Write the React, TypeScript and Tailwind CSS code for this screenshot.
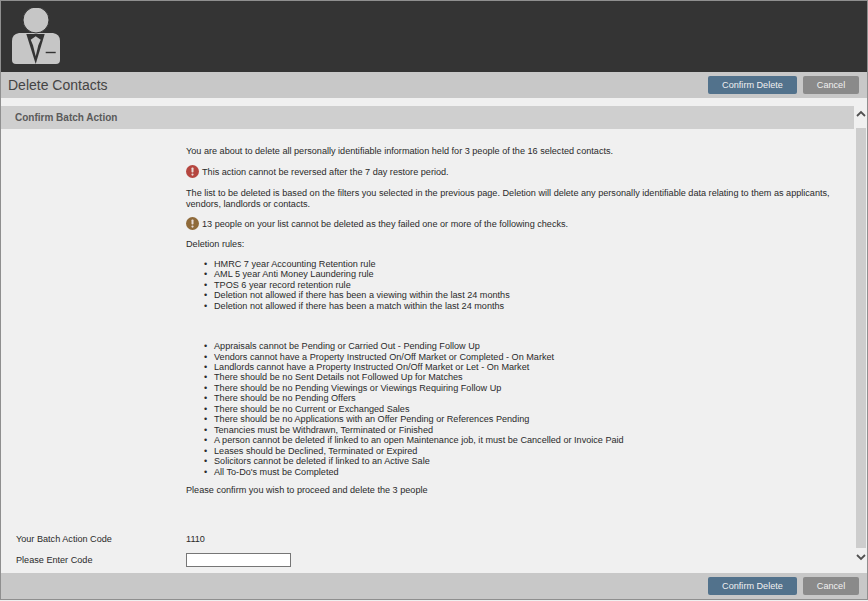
const rulesA = [
  "HMRC 7 year Accounting Retention rule",
  "AML 5 year Anti Money Laundering rule",
  "TPOS 6 year record retention rule",
  "Deletion not allowed if there has been a viewing within the last 24 months",
  "Deletion not allowed if there has been a match within the last 24 months",
];

const rulesB = [
  "Appraisals cannot be Pending or Carried Out - Pending Follow Up",
  "Vendors cannot have a Property Instructed On/Off Market or Completed - On Market",
  "Landlords cannot have a Property Instructed On/Off Market or Let - On Market",
  "There should be no Sent Details not Followed Up for Matches",
  "There should be no Pending Viewings or Viewings Requiring Follow Up",
  "There should be no Pending Offers",
  "There should be no Current or Exchanged Sales",
  "There should be no Applications with an Offer Pending or References Pending",
  "Tenancies must be Withdrawn, Terminated or Finished",
  "A person cannot be deleted if linked to an open Maintenance job, it must be Cancelled or Invoice Paid",
  "Leases should be Declined, Terminated or Expired",
  "Solicitors cannot be deleted if linked to an Active Sale",
  "All To-Do's must be Completed",
];

function Buttons() {
  return (
    <div className="flex gap-[6px] pr-[8px]">
      <button className="h-[18px] w-[89px] rounded-[2px] bg-[#52728c] text-[9.12px] leading-[18px] text-[#f0f0f0]">
        Confirm Delete
      </button>
      <button className="h-[18px] w-[56px] rounded-[2px] bg-[#8a8a8a] text-[9.12px] leading-[18px] text-[#f0f0f0]">
        Cancel
      </button>
    </div>
  );
}

function Alert({ color, children }: { color: string; children: string }) {
  return (
    <div className="flex h-[13px] items-center gap-[3px]">
      <svg width="13" height="13" viewBox="0 0 13 13" className="shrink-0">
        <circle cx="6.5" cy="6.5" r="6.5" fill={color} />
        <rect x="5.5" y="2.5" width="2" height="5" rx="0.8" fill="#e8dcd8" />
        <circle cx="6.5" cy="9.6" r="1.1" fill="#e8dcd8" />
      </svg>
      <span>{children}</span>
    </div>
  );
}

function RuleList({ items }: { items: string[] }) {
  return (
    <ul className="pl-[18px]">
      {items.map((r) => (
        <li key={r} className="flex">
          <span className="w-[10px] shrink-0">•</span>
          <span>{r}</span>
        </li>
      ))}
    </ul>
  );
}

export default function App() {
  return (
    <div className="flex h-[601px] w-[868px] flex-col overflow-hidden bg-[#f0f0f0] font-['Liberation_Sans',Arial,sans-serif] text-[9.12px] leading-[10.45px] text-[#2a2a2a]">
      <div className="flex h-[600px] flex-col border border-[#8f8f8f]">
        {/* header */}
        <div className="h-[71px] shrink-0 bg-[#343434] pl-[11px] pt-[7px]">
          <svg width="48" height="56" viewBox="0 0 48 56" className="block">
            <path
              d="M7 25 L41 25 Q48 26 48 33 L48 52 Q48 56 44 56 L4 56 Q0 56 0 52 L0 33 Q0 26 7 25 Z"
              fill="#c6c6c6"
            />
            <circle cx="24" cy="12" r="13" fill="#c6c6c6" stroke="#343434" strokeWidth="1" />
            <path d="M14.3 26 L32.7 26 L23.7 56 Z" fill="#343434" />
            <path
              d="M23.7 28.3 L28.7 31.7 L26.3 37.3 L23.7 48.3 L21 37.3 L18.7 31.7 Z"
              fill="#c6c6c6"
            />
            <rect x="33.7" y="43.8" width="10" height="1.4" fill="#343434" />
          </svg>
        </div>

        {/* title bar */}
        <div className="flex h-[26px] shrink-0 items-center justify-between bg-[#c8c8c8] pl-[7px]">
          <span className="text-[14px] text-[#444444]">Delete Contacts</span>
          <Buttons />
        </div>

        {/* scrolling body */}
        <div className="flex min-h-0 flex-1 pt-[8px]">
          <div className="min-w-0 flex-1">
            <div className="flex h-[23px] items-center bg-[#cfcfcf] pl-[14px] pt-[1px] text-[10px] font-bold text-[#5a5a5a]">
              Confirm Batch Action
            </div>
            <div className="pl-[185px] pt-[17px]">
              <p>You are about to delete all personally identifiable information held for 3 people of the 16 selected contacts.</p>
              <div className="mt-[9px]">
                <Alert color="#b5463f">This action cannot be reversed after the 7 day restore period.</Alert>
              </div>
              <p className="mt-[10px]">
                The list to be deleted is based on the filters you selected in the previous page. Deletion will delete any personally identifiable data relating to them as applicants,
                <br />
                vendors, landlords or contacts.
              </p>
              <div className="mt-[8px]">
                <Alert color="#8f6a3a">13 people on your list cannot be deleted as they failed one or more of the following checks.</Alert>
              </div>
              <p className="mt-[9px]">Deletion rules:</p>
              <div className="mt-[9px]">
                <RuleList items={rulesA} />
              </div>
              <div className="mt-[30px]">
                <RuleList items={rulesB} />
              </div>
              <p className="mt-[8px]">Please confirm you wish to proceed and delete the 3 people</p>
            </div>
            <div className="mt-[39px] flex pl-[15px]">
              <span className="w-[170px]">Your Batch Action Code</span>
              <span>1110</span>
            </div>
            <div className="mt-[8px] flex items-center pl-[15px]">
              <span className="w-[170px]">Please Enter Code</span>
              <input className="h-[14px] w-[105px] border border-[#767676] bg-white" />
            </div>
          </div>

          {/* scrollbar */}
          <div className="flex w-[13px] shrink-0 flex-col items-center">
            <svg width="10" height="10" viewBox="0 0 10 10" className="mt-[3px]">
              <path d="M1 7 L5 3 L9 7" fill="none" stroke="#505050" strokeWidth="1.8" />
            </svg>
            <div className="mt-[9px] h-[420px] w-[10px] bg-[#cdcdcd]" />
            <svg width="10" height="10" viewBox="0 0 10 10" className="mt-[4px]">
              <path d="M1 3 L5 7 L9 3" fill="none" stroke="#505050" strokeWidth="1.8" />
            </svg>
          </div>
        </div>

        {/* footer */}
        <div className="flex h-[26px] shrink-0 items-center justify-end bg-[#c8c8c8]">
          <Buttons />
        </div>
      </div>
    </div>
  );
}
